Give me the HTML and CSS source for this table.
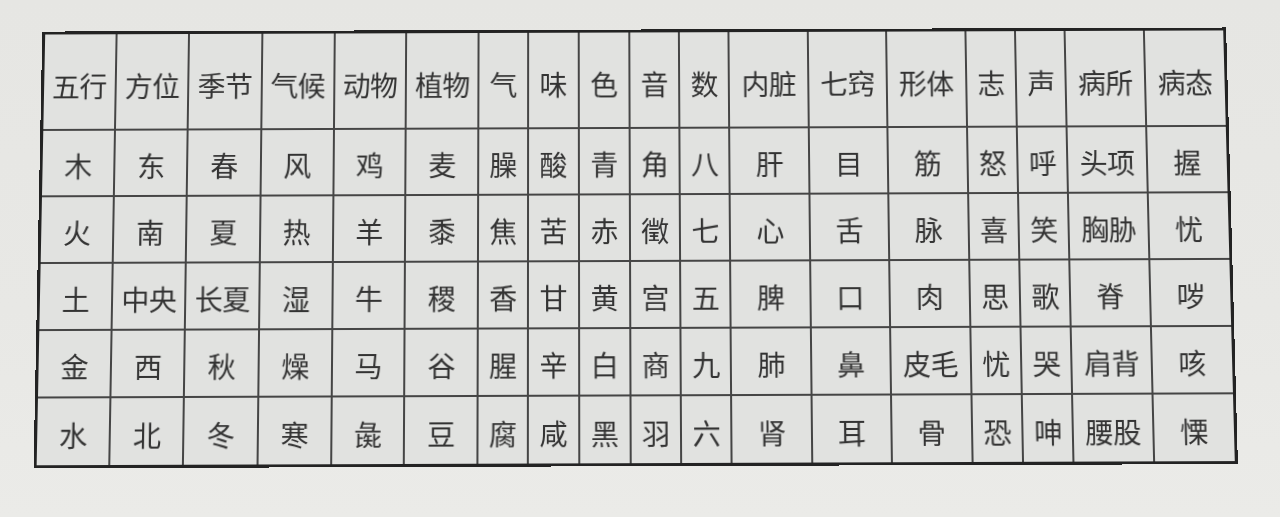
FILE: index.html
```html
<!DOCTYPE html>
<html lang="zh-CN">
<head>
<meta charset="utf-8">
<title>五行归类表</title>
<link rel="stylesheet" href="styles.css">
</head>
<body>
<div class="page">
  <div class="frame">
  <table class="wx">
    <colgroup>
      <col class="w72"><col class="w73"><col class="w73"><col class="w73"><col class="w72"><col class="w73">
      <col class="w49"><col class="w51"><col class="w51"><col class="w50"><col class="w50">
      <col class="w80"><col class="w78"><col class="w80">
      <col class="w50"><col class="w50">
      <col class="w79"><col class="w80">
    </colgroup>
    <thead>
      <tr>
        <th>五行</th><th>方位</th><th>季节</th><th>气候</th><th>动物</th><th>植物</th><th>气</th><th>味</th><th>色</th><th>音</th><th>数</th><th>内脏</th><th>七窍</th><th>形体</th><th>志</th><th>声</th><th>病所</th><th>病态</th>
      </tr>
    </thead>
    <tbody>
      <tr><td>木</td><td>东</td><td>春</td><td>风</td><td>鸡</td><td>麦</td><td>臊</td><td>酸</td><td>青</td><td>角</td><td>八</td><td>肝</td><td>目</td><td>筋</td><td>怒</td><td>呼</td><td>头项</td><td>握</td></tr>
      <tr><td>火</td><td>南</td><td>夏</td><td>热</td><td>羊</td><td>黍</td><td>焦</td><td>苦</td><td>赤</td><td>徵</td><td>七</td><td>心</td><td>舌</td><td>脉</td><td>喜</td><td>笑</td><td>胸胁</td><td>忧</td></tr>
      <tr><td>土</td><td>中央</td><td>长夏</td><td>湿</td><td>牛</td><td>稷</td><td>香</td><td>甘</td><td>黄</td><td>宫</td><td>五</td><td>脾</td><td>口</td><td>肉</td><td>思</td><td>歌</td><td>脊</td><td>哕</td></tr>
      <tr><td>金</td><td>西</td><td>秋</td><td>燥</td><td>马</td><td>谷</td><td>腥</td><td>辛</td><td>白</td><td>商</td><td>九</td><td>肺</td><td>鼻</td><td>皮毛</td><td>忧</td><td>哭</td><td>肩背</td><td>咳</td></tr>
      <tr><td>水</td><td>北</td><td>冬</td><td>寒</td><td>彘</td><td>豆</td><td>腐</td><td>咸</td><td>黑</td><td>羽</td><td>六</td><td>肾</td><td>耳</td><td>骨</td><td>恐</td><td>呻</td><td>腰股</td><td>慄</td></tr>
    </tbody>
  </table>
  </div>
</div>
</body>
</html>
```
FILE: styles.css
```css
html, body {
  margin: 0;
  padding: 0;
}
body {
  width: 1280px;
  height: 517px;
  overflow: hidden;
  background: linear-gradient(180deg, #e6e6e3 0%, #e8e8e5 60%, #ebebe8 100%);
  font-family: "Noto Sans CJK SC", "Noto Sans", sans-serif;
  color: #333333;
}
.page {
  padding: 27px 0 0 38px;
}
.frame {
  width: 1188px;
  border: 3px solid #232323;
  background: #e1e2e0;
  transform-origin: 50% 50%;
  transform: perspective(2000px) rotateX(4.5deg) rotate(-0.2deg);
}
.wx {
  border-collapse: collapse;
  table-layout: fixed;
  width: 100%;
  border-style: hidden;
}
.wx th, .wx td {
  border: 2px solid #454545;
  text-align: center;
  vertical-align: middle;
  padding: 0;
  font-size: 28px;
  line-height: 1;
  font-weight: 400;
  white-space: nowrap;
  letter-spacing: -0.5px;
}
.wx th {
  height: 97px;
  padding-top: 8px;
  box-sizing: border-box;
}
.wx td {
  height: 67px;
  padding-top: 5px;
  box-sizing: border-box;
}
.w49 { width: 49px; }
.w50 { width: 50px; }
.w51 { width: 51px; }
.w72 { width: 72px; }
.w73 { width: 73px; }
.w78 { width: 78px; }
.w79 { width: 79px; }
.w80 { width: 80px; }
```
